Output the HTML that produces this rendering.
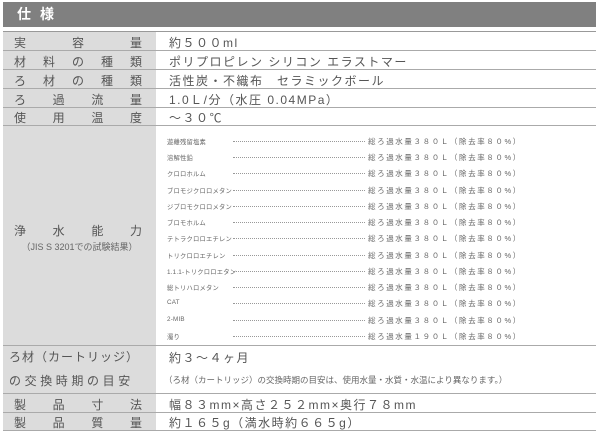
<!DOCTYPE html><html><head><meta charset="utf-8"><style>
body{margin:0;width:600px;height:431px;background:#fff;position:relative;overflow:hidden;font-family:"Liberation Sans","Noto Sans CJK JP",sans-serif;color:#555}
.hd{position:absolute;left:3px;top:2px;width:593px;height:25px;background:#808080;color:#fff;font-size:14px;font-weight:bold;line-height:25px}
.hd span{position:absolute;left:14px;letter-spacing:9px}
.lab{position:absolute;left:3px;width:153px;background:#dcdcdc}
.line{position:absolute;left:3px;width:593px;height:1px;background:#aaa}
.l{position:absolute;font-size:12px;color:#555;display:flex;justify-content:space-between;left:14px;width:128px}
.v{position:absolute;left:169px;font-size:12px;letter-spacing:1.5px;color:#555;white-space:nowrap}
.s{position:absolute;left:167px;font-size:6.3px;color:#666;white-space:nowrap;width:360px;letter-spacing:0.2px}
.s .d{position:absolute;left:66px;width:132px;top:4px;border-top:1px dotted #999}
.s .r{position:absolute;left:201px;top:-1px;letter-spacing:1.6px;font-size:7.5px}
</style></head><body>
<div class="hd"><span>仕様</span></div>
<div class="lab" style="top:31px;height:400px"></div>
<div class="line" style="top:31px;background:#999"></div>
<div class="line" style="top:50px"></div>
<div class="line" style="top:69px"></div>
<div class="line" style="top:88px"></div>
<div class="line" style="top:107px"></div>
<div class="line" style="top:125px"></div>
<div class="line" style="top:345px"></div>
<div class="line" style="top:393px"></div>
<div class="line" style="top:412px"></div>
<div class="line" style="top:430px"></div>
<div class="l" style="top:34px"><span>実</span><span>容</span><span>量</span></div>
<div class="v" style="top:34px">約５００ml</div>
<div class="l" style="top:53px"><span>材</span><span>料</span><span>の</span><span>種</span><span>類</span></div>
<div class="v" style="top:53px">ポリプロピレン シリコン エラストマー</div>
<div class="l" style="top:72px"><span>ろ</span><span>材</span><span>の</span><span>種</span><span>類</span></div>
<div class="v" style="top:72px">活性炭・不織布　セラミックボール</div>
<div class="l" style="top:91px"><span>ろ</span><span>過</span><span>流</span><span>量</span></div>
<div class="v" style="top:91px">1.0Ｌ/分（水圧 0.04MPa）</div>
<div class="l" style="top:109px"><span>使</span><span>用</span><span>温</span><span>度</span></div>
<div class="v" style="top:109px">～３０℃</div>
<div class="l" style="top:222px"><span>浄</span><span>水</span><span>能</span><span>力</span></div>
<div style="position:absolute;left:3px;width:153px;top:240px;text-align:center;font-size:9px;color:#666">（JIS S 3201での試験結果）</div>
<div class="s" style="top:137px">遊離残留塩素<i class="d"></i><span class="r">総ろ過水量３８０Ｌ（除去率８０%）</span></div>
<div class="s" style="top:153px">溶解性鉛<i class="d"></i><span class="r">総ろ過水量３８０Ｌ（除去率８０%）</span></div>
<div class="s" style="top:169px">クロロホルム<i class="d"></i><span class="r">総ろ過水量３８０Ｌ（除去率８０%）</span></div>
<div class="s" style="top:186px">ブロモジクロロメタン<i class="d"></i><span class="r">総ろ過水量３８０Ｌ（除去率８０%）</span></div>
<div class="s" style="top:202px">ジブロモクロロメタン<i class="d"></i><span class="r">総ろ過水量３８０Ｌ（除去率８０%）</span></div>
<div class="s" style="top:218px">ブロモホルム<i class="d"></i><span class="r">総ろ過水量３８０Ｌ（除去率８０%）</span></div>
<div class="s" style="top:234px">テトラクロロエチレン<i class="d"></i><span class="r">総ろ過水量３８０Ｌ（除去率８０%）</span></div>
<div class="s" style="top:251px">トリクロロエチレン<i class="d"></i><span class="r">総ろ過水量３８０Ｌ（除去率８０%）</span></div>
<div class="s" style="top:267px">1.1.1-トリクロロエタン<i class="d"></i><span class="r">総ろ過水量３８０Ｌ（除去率８０%）</span></div>
<div class="s" style="top:283px">総トリハロメタン<i class="d"></i><span class="r">総ろ過水量３８０Ｌ（除去率８０%）</span></div>
<div class="s" style="top:299px">CAT<i class="d"></i><span class="r">総ろ過水量３８０Ｌ（除去率８０%）</span></div>
<div class="s" style="top:316px">2-MIB<i class="d"></i><span class="r">総ろ過水量３８０Ｌ（除去率８０%）</span></div>
<div class="s" style="top:332px">濁り<i class="d"></i><span class="r">総ろ過水量１９０Ｌ（除去率８０%）</span></div>
<div style="position:absolute;left:9px;top:348px;font-size:12px;letter-spacing:1px">ろ材（カートリッジ）</div>
<div style="position:absolute;left:9px;top:372px;font-size:12px;letter-spacing:3.6px">の交換時期の目安</div>
<div class="v" style="top:349px">約３～４ヶ月</div>
<div style="position:absolute;left:164px;top:374px;font-size:8.5px;color:#666;white-space:nowrap">（ろ材（カートリッジ）の交換時期の目安は、使用水量・水質・水温により異なります。）</div>
<div class="l" style="top:396px"><span>製</span><span>品</span><span>寸</span><span>法</span></div>
<div class="v" style="top:396px">幅８３mm×高さ２５２mm×奥行７８mm</div>
<div class="l" style="top:414px"><span>製</span><span>品</span><span>質</span><span>量</span></div>
<div class="v" style="top:414px">約１６５g（満水時約６６５g）</div>
</body></html>
